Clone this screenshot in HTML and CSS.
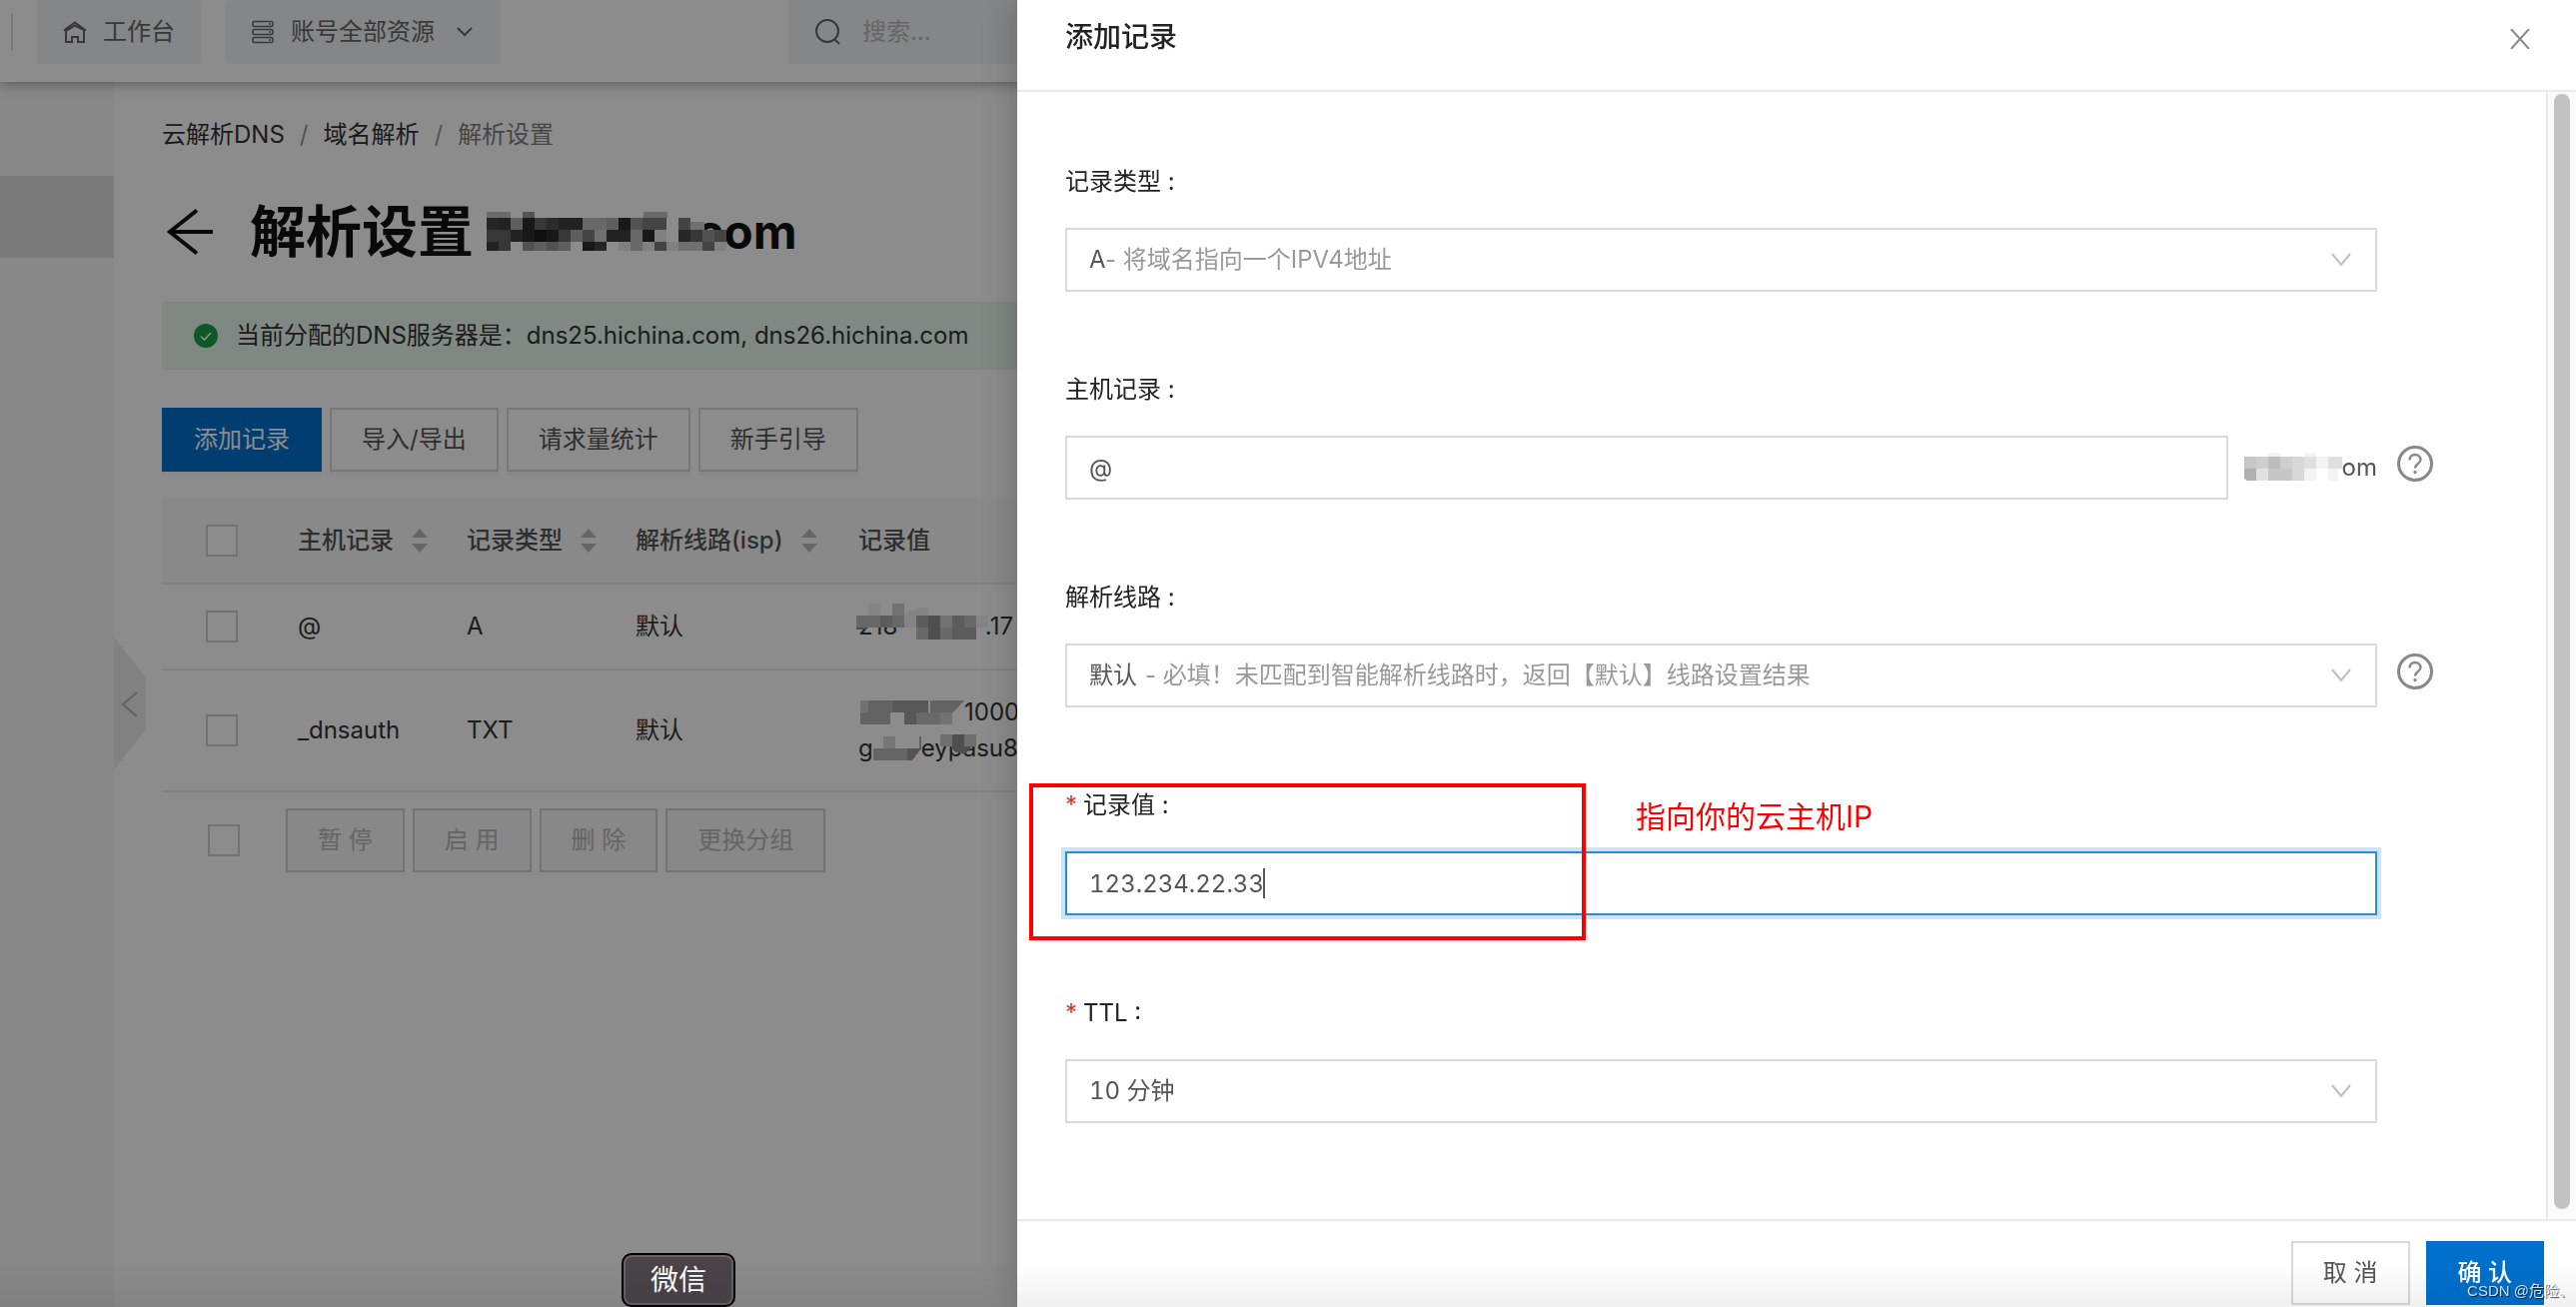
FILE: index.html
```html
<!DOCTYPE html>
<html lang="zh-CN">
<head>
<meta charset="utf-8">
<meta name="viewport" content="width=device-width, initial-scale=1">
<title>解析设置</title>
<link rel="stylesheet" href="styles.css">
</head>
<body>
<div class="page">
  <header class="topbar">
    <span class="topbar-divider"></span>
    <a class="topbar-item" href="#">
      <svg width="24" height="24" viewBox="0 0 24 24" fill="none" stroke="currentColor" stroke-width="2"><path d="M1 10.500 12 2.500 23 10.500M3 10v12h6v-5h6v5h6V10L12 5.500 3 11"/></svg>
      <span>工作台</span>
    </a>
    <button class="topbar-item topbar-account" type="button">
      <svg width="24" height="24" viewBox="0 0 24 24" fill="none" stroke="currentColor" stroke-width="1.600"><rect x="2" y="1.500" width="20" height="5" rx="1.500"/><rect x="2" y="9.500" width="20" height="5" rx="1.500"/><rect x="2" y="17.500" width="20" height="5" rx="1.500"/><path d="M18 4h2M18 12h2M18 20h2"/></svg>
      <span>账号全部资源</span>
      <svg width="16" height="10" viewBox="0 0 16 10" fill="none" stroke="currentColor" stroke-width="2"><path d="M1 1l7 7 7-7"/></svg>
    </button>
    <label class="topbar-search">
      <svg width="26" height="28" viewBox="0 0 26 28" fill="none" stroke="currentColor" stroke-width="2"><circle cx="13" cy="13" r="11"/><path d="M20 21l5 5"/></svg>
      <input type="text" placeholder="搜索..." aria-label="搜索">
    </label>
  </header>

  <div class="shell">
    <nav class="sidebar" aria-label="菜单"><a class="sidebar-item" href="#" aria-label="域名解析"></a></nav>
    <button class="collapse" type="button" aria-label="收起">
      <svg width="32" height="132" viewBox="0 0 32 132"><path class="collapse-shape" d="M0 0l28 35q4 5 4 10v42q0 5-4 10L0 132z"/><path class="collapse-arrow" d="M23 55L9 67l14 12"/></svg>
    </button>

    <main class="content">
      <nav class="breadcrumb" aria-label="路径">
        <a href="#">云解析DNS</a><span class="slash">/</span><a href="#">域名解析</a><span class="slash">/</span><span class="current">解析设置</span>
      </nav>

      <div class="heading">
        <a class="back" href="#" aria-label="返回"><svg width="48" height="48" viewBox="0 0 48 48" fill="none" stroke="currentColor" stroke-width="4"><path d="M47 24H4M31 2.500L4 24l27 21.500"/></svg></a>
        <h1>解析设置<span class="domain"><svg class="mosaic" width="243" height="40" viewBox="0 0 243 40" shape-rendering="crispEdges">
          <g fill="#c4c4c4"><path d="M0 0h24v6H0zM157 0h24v6h-24z"/></g><path fill="#9a9a9a" d="M36 0h12v6H36z"/>
          <g fill="#454545"><path d="M0 6h12v12H0zM192 18h12v12h-12zM108 30h12v9h-12z"/></g>
          <g fill="#3e3e3e"><path d="M12 6h12v12H12zM72 6h24v12H72zM24 18h12v12H24zM120 18h24v12h-24zM0 30h12v9H0z"/></g>
          <g fill="#ababab"><path d="M24 6h12v12H24zM120 6h12v12h-12zM84 18h12v12H84zM48 30h12v9H48zM72 30h12v9H72z"/></g>
          <g fill="#2c2c2c"><path d="M36 6h12v12H36zM132 6h12v12h-12zM36 18h12v12H36zM60 18h12v12H60zM96 30h12v9H96zM156 18h12v12h-12z"/></g>
          <g fill="#646464"><path d="M48 6h12v12H48zM0 18h24v12H0zM72 18h12v12H72zM12 30h12v9H12zM204 18h12v12h-12z"/></g>
          <path fill="#505050" d="M60 6h12v12H60z"/><path fill="#1d1d1d" d="M48 18h12v12H48z"/>
          <g fill="#bdbdbd"><path d="M96 6h24v12H96zM144 18h12v12h-12zM144 30h12v9h-12z"/></g>
          <g fill="#969696"><path d="M144 6h12v12h-12zM36 30h12v9H36zM60 30h12v9H60zM216 18h12v12h-12z"/></g>
          <g fill="#7c7c7c"><path d="M156 6h24v12h-24zM192 6h12v12h-12zM96 18h12v12H96zM168 30h12v9h-12zM216 30h12v9h-12zM228 18h12v12h-12z"/></g>
          <g fill="#cccccc"><path d="M108 18h12v12h-12zM192 30h24v9h-24zM204 10h14v8h-14z"/></g>
          <g fill="#e9e9e9"><path d="M168 18h12v12h-12zM132 30h12v9h-12zM156 30h12v9h-12zM180 30h12v9h-12zM228 30h12v9h-12z"/></g>
        </svg><span class="domain-tail">com</span></span></h1>
      </div>

      <div class="alert" role="status">
        <svg width="26" height="26" viewBox="0 0 26 26"><circle cx="13" cy="13" r="12" fill="#18a146"/><path d="M8 13.500l3.500 3.500 6.500-7" fill="none" stroke="#fff" stroke-width="1.600"/></svg>
        <span>当前分配的DNS服务器是：dns25.hichina.com, dns26.hichina.com</span>
      </div>

      <div class="actions">
        <button class="btn btn-primary" type="button">添加记录</button>
        <button class="btn" type="button">导入/导出</button>
        <button class="btn" type="button">请求量统计</button>
        <button class="btn" type="button">新手引导</button>
      </div>

      <table class="records">
        <colgroup><col class="col-check"><col class="col-host"><col class="col-type"><col class="col-line"><col></colgroup>
        <thead>
          <tr>
            <th><input type="checkbox" aria-label="全选"></th>
            <th><span class="th">主机记录<svg class="sorter" viewBox="0 0 16 24"><path d="M8 0l8 9H0zM0 15h16l-8 9z"/></svg></span></th>
            <th><span class="th">记录类型<svg class="sorter" viewBox="0 0 16 24"><path d="M8 0l8 9H0zM0 15h16l-8 9z"/></svg></span></th>
            <th><span class="th">解析线路(isp)<svg class="sorter" viewBox="0 0 16 24"><path d="M8 0l8 9H0zM0 15h16l-8 9z"/></svg></span></th>
            <th>记录值</th>
          </tr>
        </thead>
        <tbody>
          <tr>
            <td><input type="checkbox" aria-label="选择 @"></td>
            <td>@</td><td>A</td><td>默认</td>
            <td><div class="value value-ip"><span>218</span><span>.17</span>
              <svg class="mosaic mosaic-ip" width="148" height="36" viewBox="0 0 148 36" shape-rendering="crispEdges"><path fill="#f0f0f0" d="M12 0h12v12H12zM60 5l12-2v9H44zM120 12h12v12h-12zM48 12h12v12H48z"/><path fill="#d0d0d0" d="M36 0h12v12H36zM84 12h12v12H84z"/><path fill="#bdbdbd" d="M0 12h24v12H0zM36 12h12v12H36zM108 12h12v12h-12zM60 24h12v12H60zM84 24h12v12H84z"/><path fill="#a8a8a8" d="M24 12h12v12H24zM60 12h12v12H60zM96 12h12v12H96zM96 24h24v12H96z"/><path fill="#909090" d="M72 12h12v24H72zM0 24h10v2H0z"/></svg>
            </div></td>
          </tr>
          <tr class="row-tall">
            <td><input type="checkbox" aria-label="选择 _dnsauth"></td>
            <td>_dnsauth</td><td>TXT</td><td>默认</td>
            <td><div class="value"><svg class="mosaic" width="106" height="24" viewBox="0 0 106 24" shape-rendering="crispEdges"><path fill="#d0d0d0" d="M2 0h8v12H2zM82 12h12v12H82z"/><path fill="#b4b4b4" d="M10 0h24v12H10zM2 12h30v12H2zM72 0h34L94 12H72z"/><path fill="#a0a0a0" d="M34 0h36v12H34zM46 12h12v12H46zM58 0h12v12H58z"/><path fill="#c0c0c0" d="M58 12h24v12H58z"/></svg>10000</div>
            <div class="value">g<svg class="mosaic mosaic-key" width="48" height="24" viewBox="0 0 48 24" shape-rendering="crispEdges"><path fill="#d8d8d8" d="M10 0h12v12H10z"/><path fill="#b8b8b8" d="M0 12h34v12H0z"/><path fill="#b0b0b0" d="M46 0h2v12h-2z"/><path fill="#9a9a9a" d="M34 12h14l-9 12h-5z"/></svg>eypasu8
              <svg class="mosaic mosaic-tail" width="36" height="20" viewBox="0 0 36 20"><path fill="#c8c8c8" d="M0 0h12v12H0zM24 0h12v12H24z"/><path fill="#909090" d="M12 0h12v12h8l-8 8-10-3-4-5h2z"/></svg></div></td>
          </tr>
        </tbody>
      </table>

      <div class="batch">
        <input type="checkbox" aria-label="批量选择">
        <div class="batch-buttons">
          <button class="btn" type="button" disabled>暂 停</button>
          <button class="btn" type="button" disabled>启 用</button>
          <button class="btn" type="button" disabled>删 除</button>
          <button class="btn" type="button" disabled>更换分组</button>
        </div>
      </div>
    </main>
  </div>
</div>

<div class="mask"></div>
<div class="dock-tip">微信</div>

<section class="drawer" role="dialog" aria-labelledby="drawer-title">
  <header class="drawer-header">
    <h2 id="drawer-title">添加记录</h2>
    <button class="close" type="button" aria-label="关闭"><svg width="20" height="20" viewBox="0 0 20 20" fill="none" stroke="currentColor" stroke-width="2"><path d="M1 0l18 20M19 0L1 20"/></svg></button>
  </header>

  <div class="drawer-main">
    <form class="form" id="record-form">
      <div class="field">
        <label for="type">记录类型 :</label>
        <div class="field-row">
          <div class="select">
            <select id="type"><option>A</option></select>
            <span class="hint hint-type">- 将域名指向一个IPV4地址</span>
            <svg class="chevron" viewBox="0 0 20 14"><path d="M1 1l9 11 9-11"/></svg>
          </div>
        </div>
      </div>
      <div class="field">
        <label for="host">主机记录 :</label>
        <div class="field-row">
          <div class="host-row">
            <input class="text" id="host" type="text" value="@">
            <span class="suffix"><svg class="mosaic" width="100" height="30" viewBox="0 0 100 30" shape-rendering="crispEdges"><path fill="#f3f3f3" d="M26 0h12v4H26zM62 0h12v4H62zM62 16h12v12H62zM74 4h12v12H74zM86 16h10v12H86z"/><path fill="#c6c6c6" d="M2 4h12v12H2zM26 16h24v12H26z"/><path fill="#cecece" d="M14 4h12v12H14zM38 4h12v12H38z"/><path fill="#bcbcbc" d="M26 4h12v12H26z"/><path fill="#d8d8d8" d="M50 4h12v24H50z"/><path fill="#e0e0e0" d="M62 4h12v12H62zM14 16h12v12H14zM86 4h14v12H86z"/><path fill="#b0b0b0" d="M2 16h12v12H4l-2-2z"/></svg>om</span>
          </div>
          <button class="help" type="button" aria-label="主机记录说明"><svg width="36" height="36" viewBox="0 0 36 36" fill="none" stroke="currentColor"><circle cx="18" cy="18" r="16.500" stroke-width="3"/><path stroke-width="2.400" d="M12.500 14.500c0-3.500 2.500-5.500 5.500-5.500s5.500 2 5.500 5c0 4-5.500 4-5.500 8.500"/><circle cx="18" cy="26.500" r="1.700" fill="currentColor" stroke="none"/></svg></button>
        </div>
      </div>
      <div class="field">
        <label for="line">解析线路 :</label>
        <div class="field-row">
          <div class="select">
            <select id="line"><option>默认</option></select>
            <span class="hint hint-line">- 必填！未匹配到智能解析线路时，返回【默认】线路设置结果</span>
            <svg class="chevron" viewBox="0 0 20 14"><path d="M1 1l9 11 9-11"/></svg>
          </div>
          <button class="help" type="button" aria-label="解析线路说明"><svg width="36" height="36" viewBox="0 0 36 36" fill="none" stroke="currentColor"><circle cx="18" cy="18" r="16.500" stroke-width="3"/><path stroke-width="2.400" d="M12.500 14.500c0-3.500 2.500-5.500 5.500-5.500s5.500 2 5.500 5c0 4-5.500 4-5.500 8.500"/><circle cx="18" cy="26.500" r="1.700" fill="currentColor" stroke="none"/></svg></button>
        </div>
      </div>
      <div class="field">
        <label for="value"><span class="required">*</span>记录值 :</label>
        <div class="field-row">
          <input class="text text-focus" id="value" type="text" value="123.234.22.33">
          <span class="caret"></span>
        </div>
        <div class="callout-box"></div>
        <span class="callout-text">指向你的云主机IP</span>
      </div>
      <div class="field">
        <label for="ttl"><span class="required">*</span>TTL :</label>
        <div class="field-row">
          <div class="select">
            <select id="ttl"><option>10 分钟</option></select>
            <svg class="chevron" viewBox="0 0 20 14"><path d="M1 1l9 11 9-11"/></svg>
          </div>
        </div>
      </div>
    </form>
    <div class="scroll-track"><div class="scroll-thumb"></div></div>
  </div>

  <footer class="drawer-footer">
    <button class="btn" type="button">取 消</button>
    <button class="btn btn-primary btn-strong" type="submit" form="record-form">确 认</button>
  </footer>
</section>
<div class="dock-shade"></div>
<span class="watermark">CSDN @危险、</span>
</body>
</html>
```

FILE: styles.css
```css
* { box-sizing: border-box; }
body {
  margin: 0;
  height: 100vh;
  overflow: hidden;
  background: #fff;
  color: #333;
  font: 24px/36px Inter, "Noto Sans CJK SC", sans-serif;
}
button, input, select { font: inherit; color: inherit; margin: 0; }
a { color: inherit; text-decoration: none; }
svg { display: block; flex: none; }
h1, h2 { margin: 0; }

.page { display: flex; flex-direction: column; height: 100vh; isolation: isolate; }

/* Top bar */
.topbar {
  position: relative;
  z-index: 2;
  display: flex;
  align-items: flex-start;
  height: 82px;
  background: #fff;
  box-shadow: 0 2px 12px rgba(0, 0, 0, .35);
  color: #666;
}
.topbar-divider { width: 2px; height: 36px; margin: 14px 24px 0 11px; background: #d9d9d9; }
.topbar-item {
  display: flex;
  align-items: center;
  gap: 16px;
  height: 64px;
  margin-right: 24px;
  padding: 0 26px;
  border: 0;
  border-radius: 4px;
  background: #f1f4f7;
}
.topbar-account svg:last-child { margin: 0 2px 0 6px; }
.topbar-search {
  display: flex;
  align-items: center;
  gap: 22px;
  flex: 1;
  height: 64px;
  margin-left: 264px;
  padding-left: 26px;
  background: #f1f4f7;
}
.topbar-search input { border: 0; background: none; padding: 0; outline: 0; }
.topbar-search input::placeholder { color: #bbb; opacity: 1; }

/* Shell */
.shell { position: relative; display: flex; flex: 1; min-height: 0; }
.sidebar { flex: none; width: 114px; padding-top: 94px; background: #f7f7f7; }
.sidebar-item { display: block; height: 82px; background: #dedede; }
.collapse { position: absolute; left: 114px; top: 556px; padding: 0; border: 0; background: none; }
.collapse-shape { fill: #ebebeb; }
.collapse-arrow { fill: none; stroke: #b0b0b0; stroke-width: 2; }
.content { flex: 1; min-width: 0; padding: 35px 30px 0 48px; }

.breadcrumb { display: flex; }
.breadcrumb .slash { padding: 0 15px; color: #999; }
.breadcrumb .current { color: #808080; }

.heading { display: flex; align-items: center; height: 80px; margin: 39px 0 30px; color: #111; }
.back { margin: 0 36px 0 4px; }
h1 { display: flex; align-items: center; font-size: 56px; line-height: 80px; font-weight: 700; }
.domain { display: flex; align-items: center; padding-left: 13px; font-size: 48px; }
.domain .mosaic { position: relative; z-index: 1; }
.domain-tail { margin-left: -34px; }

.alert { display: flex; align-items: center; gap: 17px; height: 68px; padding: 0 31px; background: #e8f7ef; }

.actions { display: flex; gap: 8px; margin: 38px 0 26px; }
.btn {
  height: 64px;
  padding: 0 30px;
  border: 2px solid #d9d9d9;
  border-radius: 0;
  background: #fff;
  color: #555;
  white-space: pre;
}
.btn-primary { border-color: #0070cc; background: #0070cc; color: #fff; }
.btn-strong { font-weight: 500; }
.btn:disabled { border-color: #d2d2d2; background: #f7f7f7; color: #b8b8b8; }
.actions .btn { box-shadow: 0 4px 0 rgba(0, 0, 0, .02); }

/* Records */
.records { width: 100%; table-layout: fixed; border-collapse: collapse; }
.col-check { width: 116px; }
.col-host, .col-type { width: 169px; }
.col-line { width: 223px; }
.records th { height: 86px; padding: 0 0 0 20px; background: #f9f9f9; text-align: left; font-weight: 500; color: #555; white-space: nowrap; border-bottom: 2px solid #ebebeb; }
.records td { height: 86px; padding: 0 0 0 20px; border-bottom: 2px solid #ebebeb; }
.records .row-tall td { height: 122px; }
.records th:first-child, .records td:first-child { padding-left: 44px; }
.th { display: flex; align-items: center; gap: 18px; }
.sorter { width: 16px; height: 24px; fill: #bbb; }
input[type="checkbox"] { display: block; appearance: none; width: 32px; height: 32px; border: 2px solid #d0d0d0; background: #fff; }
.value { position: relative; display: flex; align-items: center; height: 36px; }
.value-ip { width: 155px; justify-content: space-between; }
.mosaic-ip { position: absolute; left: -2px; top: -5px; }
.mosaic-tail { position: absolute; left: 82px; top: 4px; }

.batch { display: flex; align-items: center; gap: 46px; padding: 16px 0 0 46px; }
.batch-buttons { display: flex; gap: 8px; }

/* Overlays */
.mask { position: fixed; inset: 0; background: rgba(0, 0, 0, .45); }
.dock-tip {
  position: fixed;
  left: 622px;
  bottom: 0;
  width: 114px;
  height: 54px;
  border: 2px solid #000;
  border-radius: 10px;
  box-shadow: inset 0 0 0 2px #686268;
  background: #4a444a;
  color: #fff;
  font-size: 28px;
  line-height: 50px;
  text-align: center;
}
.dock-shade { position: fixed; inset: auto 0 0; height: 44px; background: linear-gradient(transparent, rgba(0, 0, 0, .06)); pointer-events: none; }
.watermark { position: fixed; right: 2px; bottom: 4px; color: rgba(255, 255, 255, .8); font: 15px/24px "Liberation Sans", "Noto Sans CJK SC", sans-serif; text-shadow: 1px 1px 1px rgba(0, 0, 0, .7); }

/* Drawer */
.drawer {
  position: fixed;
  inset: 0 0 0 auto;
  display: flex;
  flex-direction: column;
  width: min(1560px, 100%);
  background: #fff;
  box-shadow: -8px 0 32px rgba(0, 0, 0, .16);
}
.drawer-header { display: flex; justify-content: space-between; height: 92px; padding: 16px 46px 0 48px; border-bottom: 2px solid #e6ebed; }
h2 { font-size: 28px; line-height: 42px; font-weight: 500; color: #222; }
.close { height: 46px; padding: 0; border: 0; background: none; color: #888; }
.drawer-main { display: flex; flex: 1; min-height: 0; }
.form { display: flex; flex: 1; flex-direction: column; gap: 80px; padding: 72px 0 0 48px; }
.field { position: relative; display: flex; flex-direction: column; gap: 28px; color: #555; }
.field label { color: #222; line-height: 36px; height: 36px; }
.required { display: inline-block; width: 18px; color: #d93026; font-size: 24px; }
.field-row { position: relative; display: flex; padding-right: 169px; height: 64px; }
.select { display: grid; flex: 1; }
.select > * { grid-area: 1 / 1; align-self: center; }
.select select, .text { width: 100%; height: 64px; padding: 0 22px; border: 2px solid #d9d9d9; border-radius: 0; background: #fff; outline: 0; appearance: none; font-variant-numeric: tabular-nums; }
.hint { color: #999; pointer-events: none; }
.hint-type { padding-left: 40px; }
.hint-line { padding-left: 80px; }
.chevron { justify-self: end; width: 20px; height: 14px; margin-right: 26px; fill: none; stroke: #bfbfbf; stroke-width: 2; pointer-events: none; }
.host-row { display: flex; flex: 1; align-items: center; }
.host-row .text { flex: 1; width: auto; min-width: 0; }
.suffix { display: flex; align-items: center; padding-left: 14px; }
.help { position: absolute; right: 113px; top: 10px; padding: 0; border: 0; background: none; color: #888; }
.text-focus { border-color: #268bd9; box-shadow: 0 0 0 4px #d0e1f4; }
.caret { position: absolute; left: 198px; top: 17px; width: 2px; height: 30px; background: #555; }
.callout-box { position: absolute; left: -36px; top: -4px; width: 557px; height: 157px; border: 4px solid #f00; pointer-events: none; }
.callout-text { position: absolute; left: 571px; top: 11px; color: #f00; font-size: 30px; line-height: 36px; }
.scroll-track { flex: none; width: 30px; padding: 2px 6px 10px; border-left: 2px solid #e8e8e8; background: #fafafa; }
.scroll-thumb { width: 16px; height: 100%; border-radius: 8px; background: #c1c1c1; }
.drawer-footer { display: flex; justify-content: flex-end; gap: 16px; padding: 20px 32px 2px 0; border-top: 2px solid #e6ebed; }
```
